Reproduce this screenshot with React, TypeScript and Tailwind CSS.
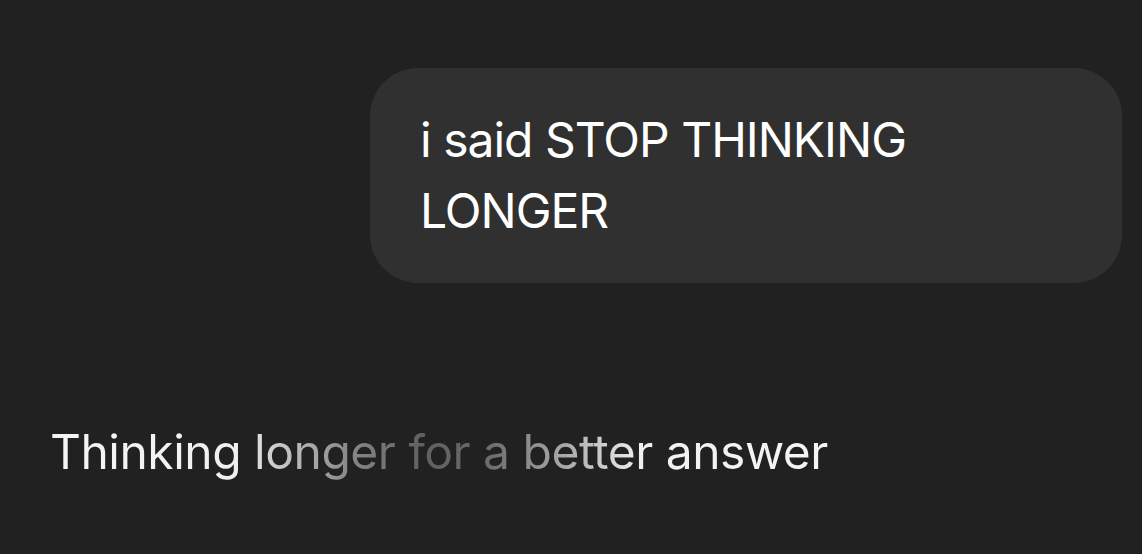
export default function App() {
  return (
    <div className="flex h-[554px] w-full flex-col bg-[#212121] font-['Inter',sans-serif] text-white">
      <div className="flex justify-end pr-[20px] pt-[68px]">
        <div className="w-[752px] rounded-[48px] bg-[#303030] px-[50px] pb-[37px] pt-[36px] text-[48px] leading-[71px] tracking-[-1px]">
          i said STOP THINKING LONGER
        </div>
      </div>
      <div className="pl-[50px] pt-[139px]">
        <span className="bg-[linear-gradient(90deg,#f5f5f5_0%,#f0f0f0_24%,#8a8a8a_38%,#5f5f5f_48%,#6a6a6a_56%,#a8a8a8_66%,#f0f0f0_76%,#f5f5f5_100%)] bg-clip-text text-[48px] leading-[60px] tracking-[-0.5px] text-transparent">
          Thinking longer for a better answer
        </span>
      </div>
    </div>
  )
}
